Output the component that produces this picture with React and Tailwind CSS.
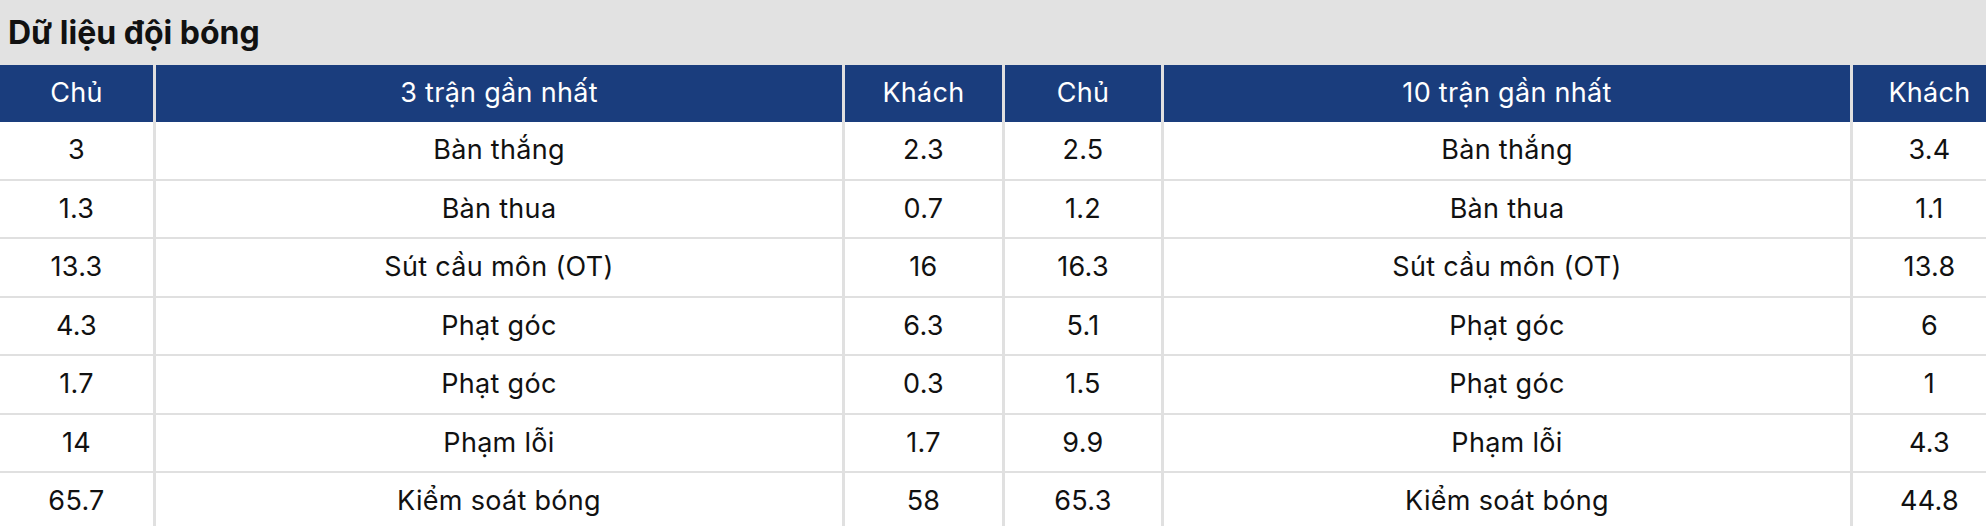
const rows = [
  ["3", "Bàn thắng", "2.3", "2.5", "Bàn thắng", "3.4"],
  ["1.3", "Bàn thua", "0.7", "1.2", "Bàn thua", "1.1"],
  ["13.3", "Sút cầu môn (OT)", "16", "16.3", "Sút cầu môn (OT)", "13.8"],
  ["4.3", "Phạt góc", "6.3", "5.1", "Phạt góc", "6"],
  ["1.7", "Phạt góc", "0.3", "1.5", "Phạt góc", "1"],
  ["14", "Phạm lỗi", "1.7", "9.9", "Phạm lỗi", "4.3"],
  ["65.7", "Kiểm soát bóng", "58", "65.3", "Kiểm soát bóng", "44.8"],
];

const headers = ["Chủ", "3 trận gần nhất", "Khách", "Chủ", "10 trận gần nhất", "Khách"];

const widths = [
  "w-[153px]",
  "w-[689px] border-l-[3px]",
  "w-[160px] border-l-[3px]",
  "w-[159px] border-l-[3px]",
  "w-[689px] border-l-[3px]",
  "w-[156px] border-l-[3px]",
];

export default function App() {
  return (
    <div className="h-[526px] w-[1986px] overflow-hidden bg-white font-['Inter',sans-serif] text-[#111]">
      <div className="flex h-[65px] items-center bg-[#e2e2e2] pl-2">
        <h2 className="text-[32px] font-bold text-[#111]">
          Dữ liệu đội bóng
        </h2>
      </div>

      <div className="flex h-[57px] w-[2009px] bg-[#1a3d7d] text-white">
        {headers.map((h, i) => (
          <div
            key={i}
            className={`${widths[i]} flex shrink-0 items-center justify-center border-[#e0e0e0] text-[27px] tracking-[0.3px]`}
          >
            {h}
          </div>
        ))}
      </div>

      {rows.map((row, r) => (
        <div key={r} className="flex h-[58.5px] w-[2009px] border-b-2 border-[#e0e0e0]">
          {row.map((cell, i) => (
            <div
              key={i}
              className={`${widths[i]} flex shrink-0 items-center justify-center border-[#e0e0e0] text-[27px] tracking-[0.3px]`}
            >
              {cell}
            </div>
          ))}
        </div>
      ))}
    </div>
  );
}
